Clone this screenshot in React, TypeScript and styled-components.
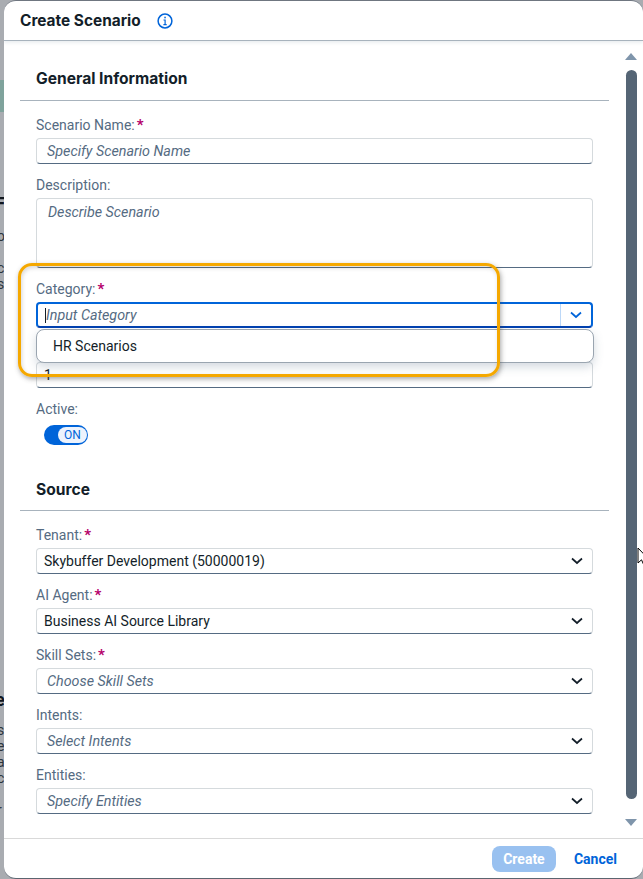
import React from 'react'
import styled, { createGlobalStyle } from 'styled-components'

const GlobalStyle = createGlobalStyle`
  html, body {
    margin: 0;
    padding: 0;
    height: 100%;
    overflow: hidden;
    background: #a9acb1;
  }
  #root {
    height: 100%;
  }
`

function ChevronDown({ color = '#131e29' }: { color?: string }) {
  return (
    <svg width="12" height="8" viewBox="0 0 12 8" fill="none">
      <path d="M1 1.5 L6 6 L11 1.5" stroke={color} strokeWidth="1.7" />
    </svg>
  )
}

function InfoIcon() {
  return (
    <svg width="16" height="16" viewBox="0 0 16 16" fill="none">
      <circle cx="8" cy="8" r="6.9" stroke="#0064d9" strokeWidth="1.5" />
      <rect x="7.3" y="3.7" width="1.5" height="1.6" fill="#0064d9" />
      <path d="M6.5 7 H8.1 V11.4 M6.4 11.6 H9.7" stroke="#0064d9" strokeWidth="1.2" />
    </svg>
  )
}

function Cursor() {
  return (
    <CursorMark width="12" height="20" viewBox="0 0 12 20">
      <path d="M1 1 V16 L4.5 12.8 L7 18.5 L9.5 17.4 L7 12 H11.5 Z" fill="#ffffff" stroke="#000000" strokeWidth="1" />
    </CursorMark>
  )
}

type FieldProps = {
  label: string
  required?: boolean
  placeholder?: string
  value?: string
}

function SelectField({ label, required, placeholder, value }: FieldProps) {
  return (
    <Field>
      <Label>
        {label}
        {required && <Star>*</Star>}
      </Label>
      <InputBox>
        {value ? <Value>{value}</Value> : <Placeholder>{placeholder}</Placeholder>}
        <ChevronSlot>
          <ChevronDown />
        </ChevronSlot>
      </InputBox>
    </Field>
  )
}

export default function App() {
  return (
    <Page>
      <GlobalStyle />
      <Backdrop>
        <Stripe />
        <BehindTitle $top={194}>Fi</BehindTitle>
        <BehindText $top={228}>
          o<br />l<br />c<br />s
        </BehindText>
        <BehindTitle $top={690}>e</BehindTitle>
        <BehindText $top={722}>
          s<br />e<br />a<br />c<br />j<br />r
        </BehindText>
      </Backdrop>
      <Dialog>
        <Header>
          <DialogTitle>Create Scenario</DialogTitle>
          <InfoIcon />
        </Header>
        <Body>
          <Content>
            <SectionTitle>General Information</SectionTitle>
            <Field>
              <Label>
                Scenario Name:<Star>*</Star>
              </Label>
              <InputBox>
                <Placeholder>Specify Scenario Name</Placeholder>
              </InputBox>
            </Field>
            <Field>
              <Label>Description:</Label>
              <TextArea>
                <Placeholder>Describe Scenario</Placeholder>
              </TextArea>
            </Field>
            <Field>
              <Label>
                Category:<Star>*</Star>
              </Label>
              <FocusBox>
                <Caret />
                <FocusPlaceholder>Input Category</FocusPlaceholder>
                <FocusButton>
                  <ChevronDown color="#0064d9" />
                </FocusButton>
              </FocusBox>
              <Popover>HR Scenarios</Popover>
            </Field>
            <Field>
              <Label>&nbsp;</Label>
              <InputBox>
                <Value>1</Value>
              </InputBox>
            </Field>
            <ActiveField>
              <ActiveLabel>Active:</ActiveLabel>
              <Switch>
                <SwitchKnob>ON</SwitchKnob>
              </Switch>
            </ActiveField>
            <SourceTitle>Source</SourceTitle>
            <SelectField label="Tenant:" required value="Skybuffer Development (50000019)" />
            <SelectField label="AI Agent:" required value="Business AI Source Library" />
            <SelectField label="Skill Sets:" required placeholder="Choose Skill Sets" />
            <SelectField label="Intents:" placeholder="Select Intents" />
            <SelectField label="Entities:" placeholder="Specify Entities" />
          </Content>
          <Scrollbar>
            <ArrowUp />
            <Thumb />
            <ArrowDown />
          </Scrollbar>
          <Highlight />
        </Body>
        <Footer>
          <CreateButton>Create</CreateButton>
          <CancelButton>Cancel</CancelButton>
        </Footer>
      </Dialog>
      <Cursor />
    </Page>
  )
}

const Page = styled.div`
  position: relative;
  width: 643px;
  height: 879px;
  overflow: hidden;
  font-family: Roboto, 'Noto Sans', sans-serif;
`

const Backdrop = styled.div`
  position: absolute;
  inset: 0;
  background: #a9acb1;
`

const Stripe = styled.div`
  position: absolute;
  top: 80px;
  left: 0;
  width: 4px;
  height: 32px;
  background: #7fa39c;
`

const BehindText = styled.div<{ $top: number }>`
  position: absolute;
  top: ${(p) => p.$top}px;
  left: -3px;
  width: 7px;
  overflow: hidden;
  font-size: 14px;
  line-height: 16px;
  color: #2c343c;
`

const BehindTitle = styled(BehindText)`
  left: -5px;
  width: 9px;
  font-size: 18px;
  line-height: 20px;
  font-weight: 700;
  color: #10161d;
`

const CursorMark = styled.svg`
  position: absolute;
  top: 547px;
  left: 637px;
`

const Dialog = styled.div`
  position: relative;
  display: flex;
  flex-direction: column;
  box-sizing: border-box;
  width: 639px;
  height: 879px;
  margin-left: 4px;
  background: #ffffff;
  border-radius: 12px;
  overflow: hidden;
  border-top: 1px solid #6f7680;
  border-bottom: 1px solid #5b6570;
`

const Header = styled.div`
  display: flex;
  align-items: center;
  gap: 16px;
  flex: none;
  box-sizing: border-box;
  height: 40px;
  padding: 0 16px;
  border-bottom: 1px solid #a8b3bd;
  box-shadow: 0 2px 3px rgba(131, 150, 168, 0.16);
`

const DialogTitle = styled.div`
  font-family: Inter, Roboto, sans-serif;
  font-size: 15.4px;
  font-weight: 700;
  color: #131e29;
`

const Body = styled.div`
  position: relative;
  flex: 1;
  display: flex;
  min-height: 0;
`

const Content = styled.div`
  flex: 1;
  padding: 28px 0 0 16px;
`

const SectionTitle = styled.div`
  box-sizing: border-box;
  width: 589px;
  height: 32px;
  padding-left: 16px;
  font-family: Inter, Roboto, sans-serif;
  font-size: 15.6px;
  font-weight: 700;
  line-height: 20px;
  color: #131e29;
  border-bottom: 1px solid #a8b3bd;
  margin-bottom: 11px;
`

const SourceTitle = styled(SectionTitle)`
  height: 33px;
  padding-top: 2px;
`

const Field = styled.div`
  position: relative;
  box-sizing: border-box;
  width: 573px;
  padding-left: 16px;
`

const ActiveField = styled(Field)`
  height: 82px;
  padding-top: 3px;
`

const Label = styled.div`
  height: 26px;
  padding-top: 3px;
  box-sizing: border-box;
  font-size: 14px;
  line-height: 20px;
  color: #556b82;
`

const ActiveLabel = styled(Label)`
  padding-top: 0;
`

const Star = styled.span`
  margin-left: 2px;
  font-weight: 700;
  font-size: 15px;
  color: #b5006a;
`

const InputBox = styled.div`
  display: flex;
  align-items: center;
  box-sizing: border-box;
  height: 26px;
  padding: 0 8px 0 7px;
  margin-bottom: 8px;
  background: #ffffff;
  border: 1px solid #d5dadd;
  border-bottom-color: #556b82;
  border-radius: 4px;
`

const TextArea = styled(InputBox)`
  align-items: flex-start;
  height: 70px;
  padding: 5px 8px;
`

const FocusBox = styled(InputBox)`
  position: relative;
  padding-left: 7px;
  border: 2px solid #0064d9;
  border-bottom-color: #0040b0;
`

const Caret = styled.span`
  width: 1px;
  height: 15px;
  background: #131e29;
`

const FocusButton = styled.span`
  position: absolute;
  top: 0;
  right: 0;
  bottom: 0;
  display: flex;
  align-items: center;
  justify-content: center;
  width: 30px;
  border-left: 1px solid #bcd8f8;
`

const Popover = styled.div`
  position: absolute;
  z-index: 2;
  top: 53px;
  left: 16px;
  right: -1px;
  display: flex;
  align-items: center;
  box-sizing: border-box;
  height: 34px;
  padding-left: 16px;
  font-size: 14px;
  color: #131e29;
  background: #ffffff;
  border: 1px solid #9aa5b0;
  border-radius: 8px;
  box-shadow: 0 4px 10px rgba(85, 107, 130, 0.25);
`

const Placeholder = styled.span`
  padding-left: 3px;
  font-style: italic;
  font-size: 14.3px;
  color: #556b82;
  white-space: nowrap;
`

const FocusPlaceholder = styled(Placeholder)`
  padding-left: 0;
`

const Value = styled.span`
  font-size: 14px;
  color: #131e29;
  white-space: nowrap;
`

const ChevronSlot = styled.span`
  display: flex;
  margin-left: auto;
  margin-right: 1px;
`

const Switch = styled.div`
  display: flex;
  align-items: center;
  justify-content: flex-end;
  box-sizing: border-box;
  width: 44px;
  height: 20px;
  margin-left: 8px;
  padding-right: 1px;
  background: #0064d9;
  border-radius: 10px;
`

const SwitchKnob = styled.div`
  display: flex;
  align-items: center;
  justify-content: center;
  width: 29px;
  height: 16px;
  border-radius: 8px;
  background: #edf3fd;
  font-size: 12px;
  color: #0064d9;
`

const Scrollbar = styled.div`
  position: absolute;
  top: 12px;
  right: 6px;
  bottom: 8px;
  width: 12px;
  display: flex;
  flex-direction: column;
  align-items: center;
`

const ArrowUp = styled.div`
  flex: none;
  width: 0;
  height: 0;
  border-left: 6.5px solid transparent;
  border-right: 6.5px solid transparent;
  border-bottom: 7px solid #7f95ab;
`

const ArrowDown = styled.div`
  flex: none;
  width: 0;
  height: 0;
  margin-bottom: 4px;
  border-left: 6.5px solid transparent;
  border-right: 6.5px solid transparent;
  border-top: 7px solid #7f95ab;
`

const Thumb = styled.div`
  flex: 1;
  width: 11px;
  margin: 10px 0 20px;
  background: #556575;
  border-radius: 6px;
`

const Highlight = styled.div`
  position: absolute;
  z-index: 3;
  top: 222px;
  left: 14px;
  width: 482px;
  height: 114px;
  box-sizing: border-box;
  border: 3px solid #f5a800;
  border-radius: 14px;
  box-shadow: 1px 2px 5px rgba(60, 60, 60, 0.45), inset 1px 2px 4px rgba(60, 60, 60, 0.2);
  pointer-events: none;
`

const Footer = styled.div`
  display: flex;
  align-items: center;
  justify-content: flex-end;
  flex: none;
  gap: 12px;
  box-sizing: border-box;
  height: 40px;
  padding-right: 20px;
  border-top: 1px solid #d9d9d9;
`

const CreateButton = styled.div`
  display: flex;
  align-items: center;
  justify-content: center;
  width: 64px;
  height: 26px;
  border-radius: 8px;
  background: #99c1f0;
  color: #ffffff;
  font-size: 14px;
  font-weight: 700;
`

const CancelButton = styled.div`
  font-size: 14px;
  font-weight: 700;
  color: #0064d9;
  padding: 0 6px;
`
